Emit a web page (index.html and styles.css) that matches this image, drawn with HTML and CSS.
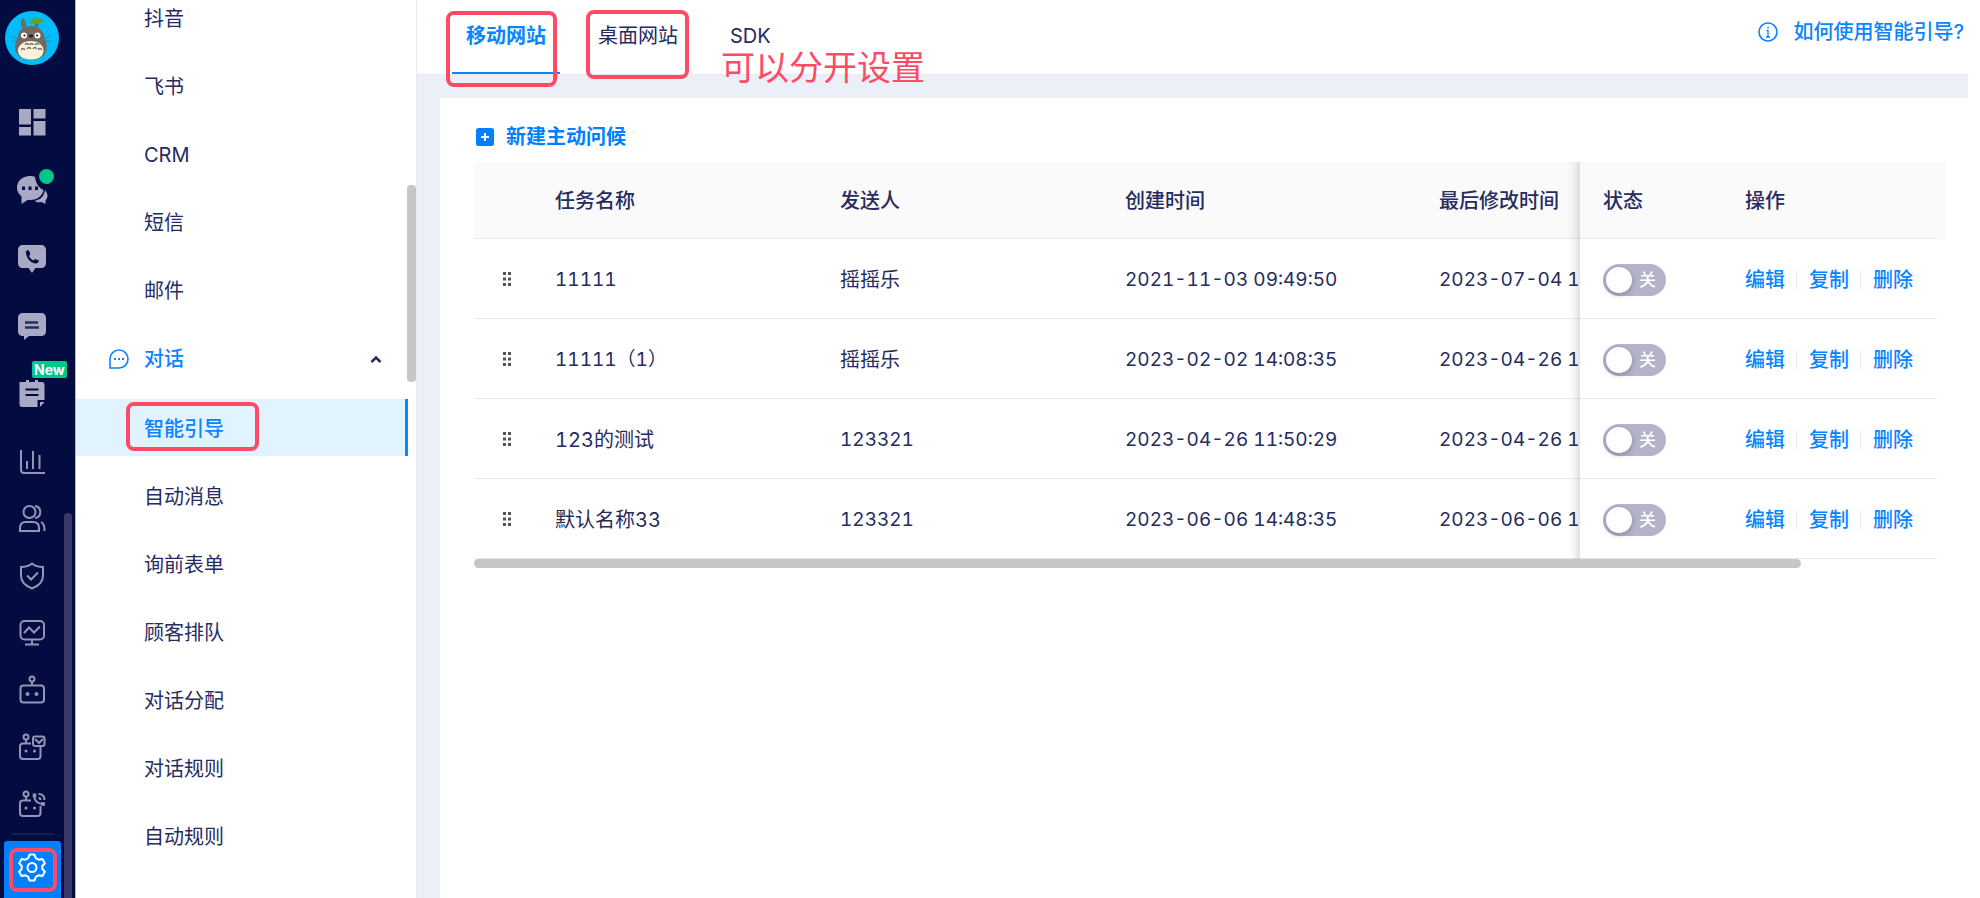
FILE: index.html
```html
<!DOCTYPE html>
<html lang="zh-CN">
<head>
<meta charset="utf-8">
<title>智能引导</title>
<link rel="stylesheet" href="styles.css">
</head>
<body>
<div class="app">
  <nav class="rail" aria-label="主导航">
    <a class="avatar" href="#" aria-label="头像">
      <svg viewBox="0 0 54 54" width="54" height="54">
        <circle cx="27" cy="27" r="27" fill="#00bdf9"/>
        <path d="M17 17c-2-5-1-9 1-10 2 1 3 5 3 9zM30 16c-.4-3 0-5 1-7l2 1c1 3 0 5 0 7z" fill="#75695f"/>
        <path d="M24 10c5-4 10-3 15-1-2 4-7 5-9 3-2 2-4 1-6-2z" fill="#62a12d"/>
        <path d="M26 15c7 0 12 4 13 10 2 6 4 10 2 16-2 5-8 8-15 8s-13-3-15-8c-2-6 0-10 2-16 1-6 6-10 13-10z" fill="#75695f"/>
        <path d="M26 30c8 0 13 5 12.500 10-.5 6-5.500 8.500-12.500 8.500S13.500 46 13 40c-.5-5 5-10 13-10z" fill="#f7f3dc"/>
        <circle cx="19" cy="24.500" r="3" fill="#fff"/><circle cx="32.500" cy="24.500" r="3" fill="#fff"/>
        <circle cx="19.500" cy="24.500" r="1.100" fill="#222"/><circle cx="32" cy="24.500" r="1.100" fill="#222"/>
        <ellipse cx="26" cy="25" rx="2.400" ry="1.500" fill="#222"/>
        <path d="M20 34q2-3 4 0M25 34q1.500-3 3.500 0M30 34q2-3 4 0M16 39q2-3 4 0M22 38q2-3 4 0M28 38q2-3 4 0M33 39q2-3 4 0" fill="none" stroke="#75695f" stroke-width="1.300"/>
        <path d="M7 26l7 2M7 30h7M46 25l-8 3M46 30h-8" stroke="#3b7f96" stroke-width=".7"/>
      </svg>
    </a>
    <div class="rail-major">
      <a class="rail-item" href="#" aria-label="概览"><svg viewBox="0 0 32 32"><path fill="currentColor" d="M3 3h12v15.500H3zM17.500 3H29.500v9.500H17.500zM3 21h12v8.500H3zM17.500 15H29.500v14.500H17.500z"/></svg></a>
      <a class="rail-item" href="#" aria-label="对话"><svg viewBox="0 0 32 32"><path fill="currentColor" d="M14 2C6.500 2 1 7 1 13.500c0 4 1.500 6.500 4.500 9V30l6-4c10 1 15.500-5 16-10C22 13.500 20 9 19 3c-1.500-.7-3-1-5-1z"/><path fill="currentColor" d="M29 16c4 5 2.500 8 .5 10.500V30l-4-2c-3 .8-5 .2-7-1 6.500-1.500 9.500-5 10.500-11z"/><path fill="#020c41" d="M6 12.500h3v3.500H6zM12.500 12.500h3v3.500h-3zM19 12.500h3v3.500h-3z"/></svg><i class="dot"></i></a>
      <a class="rail-item" href="#" aria-label="电话"><svg viewBox="0 0 32 32"><path fill="currentColor" d="M7 3h18c3 0 5 2 5 5v13c0 3-2 5-5 5h-5.500L16 31l-3.500-5H7c-3 0-5-2-5-5V8c0-3 2-5 5-5z"/><path fill="#020c41" d="M10 9l2.500-1 2 4-1.500 2c1 2 2.500 3.500 4.500 4.500l1.500-1.500 4 1.500c-.5 2-1.500 3-3.500 3-5-.5-10-6-9.500-12.500z"/></svg></a>
      <a class="rail-item" href="#" aria-label="留言"><svg viewBox="0 0 32 32"><path fill="currentColor" d="M7 3h18c3 0 5 2 5 5v13c0 3-2 5-5 5H13l-5 4v-4H7c-3 0-5-2-5-5V8c0-3 2-5 5-5z"/><path stroke="#2a2c60" stroke-width="2.600" d="M9 12.500h13M9 17.500h14"/></svg></a>
      <a class="rail-item" href="#" aria-label="工单"><svg viewBox="0 0 32 32"><path fill="currentColor" d="M4 4h6V2h3v2h6V2h3v2h4c1.500 0 2.500 1 2.500 2.500V22h-7v7H6c-1.500 0-2.500-1-2.500-2.500V4zM24 24h4.500L24 29z"/><path stroke="#020c41" stroke-width="2.200" d="M9.500 11.500h13M9.500 17h13"/></svg><span class="tag-new">New</span></a>
    </div>
    <div class="rail-minor">
      <a class="rail-item line" href="#" aria-label="统计"><svg viewBox="0 0 32 32"><path d="M5 4v20c0 2 1 3 3 3h21M11 23v-8M17 23V5M23.500 23V9"/></svg></a>
      <a class="rail-item line" href="#" aria-label="客户"><svg viewBox="0 0 32 32"><circle cx="13.500" cy="9" r="6"/><path d="M19 3c7 1 7 11 0 12M4 28v-3c0-4 2-6 6-6h7c4 0 6 2 6 6v3zM25 19c3 2 3.500 4 3.500 9"/></svg></a>
      <a class="rail-item line" href="#" aria-label="质检"><svg viewBox="0 0 32 32"><path d="M16 3.500c3 2.500 7 3.500 11 3.500v9c0 6-5 10-11 12.500C10 26 5 22 5 16V7c4 0 8-1 11-3.500zM11 15.500l4 4 7-7"/></svg></a>
      <a class="rail-item line" href="#" aria-label="监控"><svg viewBox="0 0 32 32"><rect x="4.500" y="4" width="23.500" height="18.500" rx="4"/><path d="M8 16l5-5.500 5 5 6-6M16 23v4M9 27.500h14"/></svg></a>
      <a class="rail-item line" href="#" aria-label="机器人"><svg viewBox="0 0 32 32"><rect x="4.500" y="11.500" width="23.500" height="17" rx="3"/><circle cx="16" cy="5" r="2.500"/><path d="M16 8v3"/><circle class="solid" cx="11.500" cy="20" r="2"/><circle class="solid" cx="20.500" cy="20" r="2"/></svg></a>
      <a class="rail-item line" href="#" aria-label="邮件机器人"><svg viewBox="0 0 32 32"><path d="M15 12.500H7c-2 0-3 1-3 3V25c0 2 1 3 3 3h14.500c2 0 3-1 3-3v-9M10 9v3"/><circle cx="10" cy="6" r="2.500"/><rect x="17" y="5.500" width="11.500" height="9.500" rx="2"/><path d="M19 8l4 4 4-4"/><circle class="solid" cx="10" cy="20" r="1.500"/><circle class="solid" cx="18.500" cy="20" r="1.500"/></svg></a>
      <a class="rail-item line" href="#" aria-label="外呼机器人"><svg viewBox="0 0 32 32"><path d="M15 12.500H7c-2 0-3 1-3 3V25c0 2 1 3 3 3h14.500c2 0 3-1 3-3v-7M10 9v3"/><circle cx="10" cy="6" r="2.500"/><path d="M18.500 6v4c1 4 4 6 9.500 6M22.500 6c4 0 6 2 6 6M22.500 10c1.500 0 2 .5 2 2"/><path d="M18.500 5.500v4M25 16h4" stroke-width="3.500"/><circle class="solid" cx="10" cy="20" r="1.500"/><circle class="solid" cx="18.500" cy="20" r="1.500"/></svg></a>
    </div>
    <a class="rail-item line settings" href="#" aria-label="设置"><svg viewBox="0 0 32 32"><path stroke-linejoin="round" d="M13.500 3.500h5l1.300 3.700 2.700 1.500 3.900-.7 2.500 4.300L26.300 15v3l2.600 2.700-2.500 4.300-3.900-.7-2.700 1.500-1.300 3.700h-5l-1.300-3.700-2.700-1.500-3.900.7-2.500-4.300L5.700 18v-3l-2.600-2.700L5.600 8l3.900.7 2.700-1.500z"/><circle cx="16" cy="16.500" r="4.500"/></svg><span class="mark mark-settings"></span></a>
    <span class="rail-thumb"></span>
  </nav>

  <aside class="side" aria-label="设置菜单">
    <a class="side-item" href="#">抖音</a>
    <a class="side-item" href="#">飞书</a>
    <a class="side-item" href="#">CRM</a>
    <a class="side-item" href="#">短信</a>
    <a class="side-item" href="#">邮件</a>
    <button class="side-item side-group" type="button" aria-expanded="true">
      <svg viewBox="0 0 20 20" width="20" height="20" fill="none" stroke="currentColor" stroke-width="1.600"><path d="M10 1a9 9 0 1 1 0 18H1V10a9 9 0 0 1 9-9z"/><path d="M5 10h2M9 10h2M13 10h2" stroke-width="2"/></svg>
      <span>对话</span>
      <svg class="caret" viewBox="0 0 12 8" width="12" height="8" fill="none" stroke="#2a2c60" stroke-width="2.600"><path d="M1.500 7L6 2.500 10.500 7"/></svg>
    </button>
    <a class="side-item current" href="#">智能引导<span class="mark mark-side"></span></a>
    <a class="side-item" href="#">自动消息</a>
    <a class="side-item" href="#">询前表单</a>
    <a class="side-item" href="#">顾客排队</a>
    <a class="side-item" href="#">对话分配</a>
    <a class="side-item" href="#">对话规则</a>
    <a class="side-item" href="#">自动规则</a>
    <span class="side-thumb"></span>
  </aside>

  <main class="main">
    <header class="top">
      <div class="tabs" role="tablist">
        <button class="tab active" type="button" role="tab" aria-selected="true">移动网站<span class="mark mark-tab"></span></button>
        <button class="tab" type="button" role="tab">桌面网站<span class="mark mark-tab-2"></span></button>
        <button class="tab" type="button" role="tab">SDK<span class="note">可以分开设置</span></button>
      </div>
      <a class="help" href="#">
        <svg viewBox="0 0 20 20" width="20" height="20" fill="none" stroke="currentColor"><circle cx="10" cy="10" r="9" stroke-width="1.600"/><path d="M8.500 8.500H10V15M8 15h4M9.200 5.500h1.600" stroke-width="1.300"/></svg>
        <span>如何使用智能引导?</span>
      </a>
    </header>
    <section class="card">
      <button class="create" type="button">
        <svg viewBox="0 0 18 18" width="18" height="18"><rect width="18" height="18" rx="2.500" fill="currentColor"/><path d="M9 5v8M5 9h8" stroke="#fff" stroke-width="2"/></svg>
        <span>新建主动问候</span>
      </button>
      <div class="table-area">
        <div class="scroller">
          <table class="tasks">
            <colgroup><col class="c-drag"><col class="c-name"><col class="c-sender"><col class="c-created"><col class="c-updated"><col class="c-state"><col class="c-ops"></colgroup>
            <thead>
              <tr><th></th><th>任务名称</th><th>发送人</th><th>创建时间</th><th>最后修改时间</th><th class="fix-state">状态</th><th class="fix-ops">操作</th></tr>
            </thead>
            <tbody>
              <tr>
                <td class="drag"><svg viewBox="0 0 10 14" width="10" height="14"><path d="M1 0h3v3H1zM6 0h3v3H6zM1 5.500h3v3H1zM6 5.500h3v3H6zM1 11h3v3H1zM6 11h3v3H6z"/></svg></td>
                <td class="num">11111</td><td>摇摇乐</td><td class="num">2021-11-03 09:49:50</td><td class="num">2023-07-04 14</td>
                <td class="fix-state"><label class="switch"><input type="checkbox" aria-label="状态"><span>关</span></label></td>
                <td class="fix-ops"><div class="ops"><a href="#">编辑</a><a href="#">复制</a><a href="#">删除</a></div></td>
              </tr>
              <tr>
                <td class="drag"><svg viewBox="0 0 10 14" width="10" height="14"><path d="M1 0h3v3H1zM6 0h3v3H6zM1 5.500h3v3H1zM6 5.500h3v3H6zM1 11h3v3H1zM6 11h3v3H6z"/></svg></td>
                <td class="num">11111（1）</td><td>摇摇乐</td><td class="num">2023-02-02 14:08:35</td><td class="num">2023-04-26 15</td>
                <td class="fix-state"><label class="switch"><input type="checkbox" aria-label="状态"><span>关</span></label></td>
                <td class="fix-ops"><div class="ops"><a href="#">编辑</a><a href="#">复制</a><a href="#">删除</a></div></td>
              </tr>
              <tr>
                <td class="drag"><svg viewBox="0 0 10 14" width="10" height="14"><path d="M1 0h3v3H1zM6 0h3v3H6zM1 5.500h3v3H1zM6 5.500h3v3H6zM1 11h3v3H1zM6 11h3v3H6z"/></svg></td>
                <td>123的测试</td><td class="num">123321</td><td class="num">2023-04-26 11:50:29</td><td class="num">2023-04-26 11</td>
                <td class="fix-state"><label class="switch"><input type="checkbox" aria-label="状态"><span>关</span></label></td>
                <td class="fix-ops"><div class="ops"><a href="#">编辑</a><a href="#">复制</a><a href="#">删除</a></div></td>
              </tr>
              <tr>
                <td class="drag"><svg viewBox="0 0 10 14" width="10" height="14"><path d="M1 0h3v3H1zM6 0h3v3H6zM1 5.500h3v3H1zM6 5.500h3v3H6zM1 11h3v3H1zM6 11h3v3H6z"/></svg></td>
                <td>默认名称33</td><td class="num">123321</td><td class="num">2023-06-06 14:48:35</td><td class="num">2023-06-06 14</td>
                <td class="fix-state"><label class="switch"><input type="checkbox" aria-label="状态"><span>关</span></label></td>
                <td class="fix-ops"><div class="ops"><a href="#">编辑</a><a href="#">复制</a><a href="#">删除</a></div></td>
              </tr>
            </tbody>
          </table>
        </div>
        <div class="track"><div class="track-thumb"></div></div>
      </div>
    </section>
  </main>
</div>
</body>
</html>
```

FILE: styles.css
```css
* { box-sizing: border-box; }

body {
  margin: 0;
  background: #fff;
  color: #262b60;
  font: 20px/28px Inter, "Noto Sans CJK SC", sans-serif;
  font-variant-numeric: tabular-nums;
}

a { color: inherit; text-decoration: none; }

button {
  padding: 0;
  border: 0;
  background: none;
  color: inherit;
  font: inherit;
  text-align: left;
  cursor: pointer;
}

svg { display: block; flex: none; }

.app {
  display: grid;
  grid-template-columns: 76px 341px 1fr;
  height: 100vh;
  padding-right: 12px;
  overflow: hidden;
}

/* Icon rail */
.rail {
  position: relative;
  display: flex;
  flex-direction: column;
  padding: 11px 11px 0 4px;
  border-right: 1px solid #b3b5cc;
  background: #020c41;
  color: #a9a9c3;
}

.avatar { margin: 0 0 28px 1px; }

.rail-major { display: grid; gap: 11px; margin-bottom: 11px; }

.rail-item {
  position: relative;
  display: flex;
  align-items: center;
  justify-content: center;
  width: 57px;
  height: 57px;
  padding-right: 1px;
}

.rail-item > svg { width: 32px; height: 32px; }

.line { color: #9495b4; }

.line > svg {
  fill: none;
  stroke: currentColor;
  stroke-width: 2;
}

.line .solid { fill: currentColor; stroke: none; }

.dot {
  position: absolute;
  top: 8px;
  right: 7px;
  width: 15px;
  height: 15px;
  border-radius: 50%;
  background: #00c78b;
}

.tag-new {
  position: absolute;
  top: -4px;
  left: 28px;
  padding: 0 2px;
  border-radius: 2px;
  background: #00c78b;
  color: #fff;
  font-size: 14px;
  font-weight: 700;
  line-height: 17px;
}

.settings {
  height: 57px;
  margin-top: 9px;
  padding-bottom: 5px;
  border-radius: 3px 3px 0 0;
  background: #0080ff;
  color: #fff;
}

.settings::before {
  content: "";
  position: absolute;
  top: -8px;
  left: 7px;
  right: 7px;
  height: 2px;
  background: #151f50;
}

.rail-thumb {
  position: absolute;
  top: 513px;
  right: 3px;
  bottom: 0;
  width: 8px;
  border-radius: 4px 4px 0 0;
  background: #3b3968;
}

/* Settings menu */
.side {
  position: relative;
  display: flex;
  flex-direction: column;
  gap: 11px;
  margin-top: -11px;
  border-right: 1px solid #e9eaf0;
}

.side-item {
  position: relative;
  display: flex;
  flex: none;
  align-items: center;
  height: 57px;
  margin-right: 8px;
  padding: 2px 0 0 68px;
}

.side-group {
  gap: 15px;
  margin-top: 1px;
  margin-bottom: 1px;
  padding: 0 26px 0 33px;
  color: #0a84ff;
  font-weight: 500;
}

.caret { margin-left: auto; }

.current {
  border-right: 3px solid #0a84ff;
  background: #e1f3ff;
  color: #0a84ff;
  font-weight: 500;
}

.side-thumb {
  position: absolute;
  top: 196px;
  right: 0;
  width: 9px;
  height: 197px;
  border-radius: 4px;
  background: #c6c6c6;
}

/* Content */
.main {
  display: flex;
  flex-direction: column;
  min-width: 0;
  background: #ebeff7;
}

.top {
  display: flex;
  align-items: flex-start;
  justify-content: space-between;
  padding: 0 4px 0 35px;
  border-bottom: 1px solid #e6e9ee;
  background: #fff;
}

.tabs { display: flex; gap: 24px; }

.tab {
  position: relative;
  height: 74px;
  padding: 0 14px;
  border-bottom: 2px solid transparent;
}

.tab.active {
  border-bottom-color: #0a84ff;
  color: #0a84ff;
  font-weight: 600;
}

.help {
  display: flex;
  gap: 15px;
  align-items: center;
  padding-top: 18px;
  color: #0a84ff;
  font-weight: 500;
}

.card {
  flex: 1;
  margin: 23px 0 0 23px;
  padding: 25px 22px 0 34px;
  background: #fff;
}

.create {
  display: flex;
  gap: 12px;
  align-items: center;
  margin-bottom: 11px;
  padding-left: 2px;
  color: #0080ff;
  font-weight: 700;
}

/* The tinted header strip runs on over the gutter at the right */
.table-area {
  padding-right: 9px;
  background: linear-gradient(#fafafa, #fafafa) 0 0 / 100% 77px no-repeat;
}

.scroller { overflow-x: auto; scrollbar-width: none; }

.tasks {
  width: 100%;
  min-width: 1613px;
  border-spacing: 0;
  table-layout: fixed;
}

.c-drag { width: 59px; }
.c-name, .c-sender { width: 285px; }
.c-created, .c-updated { width: 314px; }
.c-state { width: 143px; }
.c-ops { width: 214px; }

.tasks th,
.tasks td {
  height: 80px;
  padding: 2px 22px 0;
  border-bottom: 1px solid #e8e8e8;
  background: #fff;
  text-align: left;
  white-space: nowrap;
}

.tasks th {
  height: 77px;
  background: #fafafa;
  font-weight: 500;
}

.tasks .num { font-size: 19px; }

.tasks .drag { padding: 0 0 0 28px; fill: #555; }

.tasks .fix-state { position: sticky; right: 214px; padding-left: 23px; }
.tasks .fix-ops { position: sticky; right: 0; }

.fix-state::before {
  content: "";
  position: absolute;
  top: 0;
  bottom: -1px;
  left: -12px;
  width: 12px;
  background: linear-gradient(to left, rgba(0, 0, 0, 0.12), rgba(0, 0, 0, 0.04) 50%, transparent);
}

.switch {
  position: relative;
  display: flex;
  align-items: center;
  width: 63px;
  height: 32px;
}

.switch input {
  appearance: none;
  position: absolute;
  inset: 0;
  margin: 0;
  border-radius: 16px;
  background: #b3b3c9;
}

.switch input::before {
  content: "";
  position: absolute;
  top: 3px;
  left: 3px;
  width: 26px;
  height: 26px;
  border-radius: 50%;
  background: #fff;
  box-shadow: 0 2px 5px rgba(0, 35, 70, 0.3);
}

.switch span {
  position: relative;
  margin-left: 36px;
  color: #fff;
  font-size: 17px;
  font-weight: 500;
}

.ops { display: flex; color: #0a84ff; font-weight: 500; }

.ops a + a {
  position: relative;
  margin-left: 24px;
}

.ops a + a::before {
  content: "";
  position: absolute;
  top: 5px;
  left: -13px;
  width: 1px;
  height: 18px;
  background: #e6e6ee;
}

.track { height: 9px; }

.track-thumb {
  width: calc(100% * 1463 / 1613);
  height: 9px;
  border-radius: 5px;
  background: #c6c6c6;
}

/* Red annotations */
.mark {
  position: absolute;
  border: 4px solid #ff4a65;
  border-radius: 8px;
  pointer-events: none;
}

.mark-settings { inset: 7px 4px 6px 5px; }
.mark-side { top: 3px; left: 50px; width: 133px; height: 49px; }
.mark-tab { inset: 11px 3px -15px -6px; }
.mark-tab-2 { inset: 10px 3px -7px 2px; }

.note {
  position: absolute;
  top: 44px;
  left: 5px;
  z-index: 1;
  color: #ff4a65;
  font-size: 34px;
  font-weight: 400;
  line-height: 48px;
  white-space: nowrap;
}
```
